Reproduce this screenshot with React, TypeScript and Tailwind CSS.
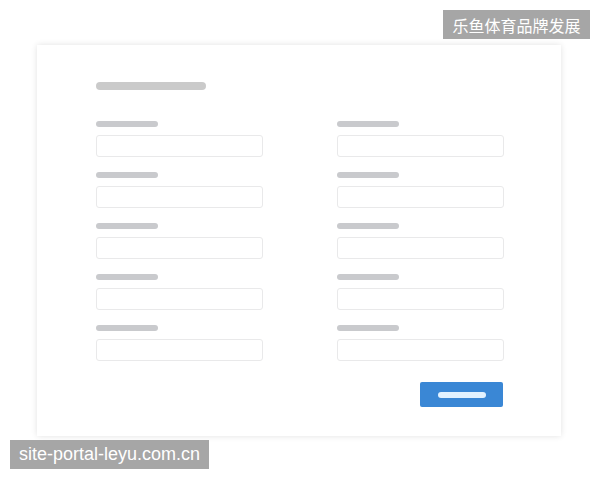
const Field = () => (
    <div className="flex flex-col">
        <div className="h-[6px] w-[62px] rounded-full bg-[#c9cacd]" />
        <div className="mt-[8px] h-[22px] w-[167px] rounded-[3px] border border-[#e9e9ea] bg-white" />
    </div>
);

export default function App() {
    const rows = [0, 1, 2, 3, 4];

    return (
        <div className="relative h-[480px] w-[600px] overflow-hidden bg-white" style={{ fontFamily: '"Noto Sans CJK SC", "Liberation Sans", sans-serif' }}>
            <div className="ml-[37px] pt-[45px]">
                <div className="h-[391px] w-[524px] bg-white pl-[59px] pt-[37px] shadow-[0_0_6px_rgba(0,0,0,0.12)]">
                    <div className="h-[8px] w-[110px] rounded-full bg-[#cacaca]" />
                    <div className="mt-[31px] flex flex-col gap-[15px]">
                        {rows.map((row) => (
                            <div key={row} className="flex gap-[74px]">
                                <Field />
                                <Field />
                            </div>
                        ))}
                    </div>
                    <div className="mt-[21px] flex w-[407px] justify-end">
                        <button className="flex h-[25px] w-[83px] items-center justify-center rounded-[2px] bg-[#3a87d5]">
                            <span className="h-[6px] w-[48px] rounded-full bg-[#e2f2ff]" />
                        </button>
                    </div>
                </div>
            </div>

            <div className="absolute left-[443px] top-[10px] flex h-[29px] w-[147px] items-center justify-center bg-[#a6a6a6] text-[16px] text-white">
                乐鱼体育品牌发展
            </div>
            <div className="absolute left-[10px] top-[440px] flex h-[29px] w-[199px] items-center justify-center bg-[#a6a6a6] text-[18px] text-white" style={{ fontFamily: '"Liberation Sans", sans-serif' }}>
                site-portal-leyu.com.cn
            </div>
        </div>
    );
}
